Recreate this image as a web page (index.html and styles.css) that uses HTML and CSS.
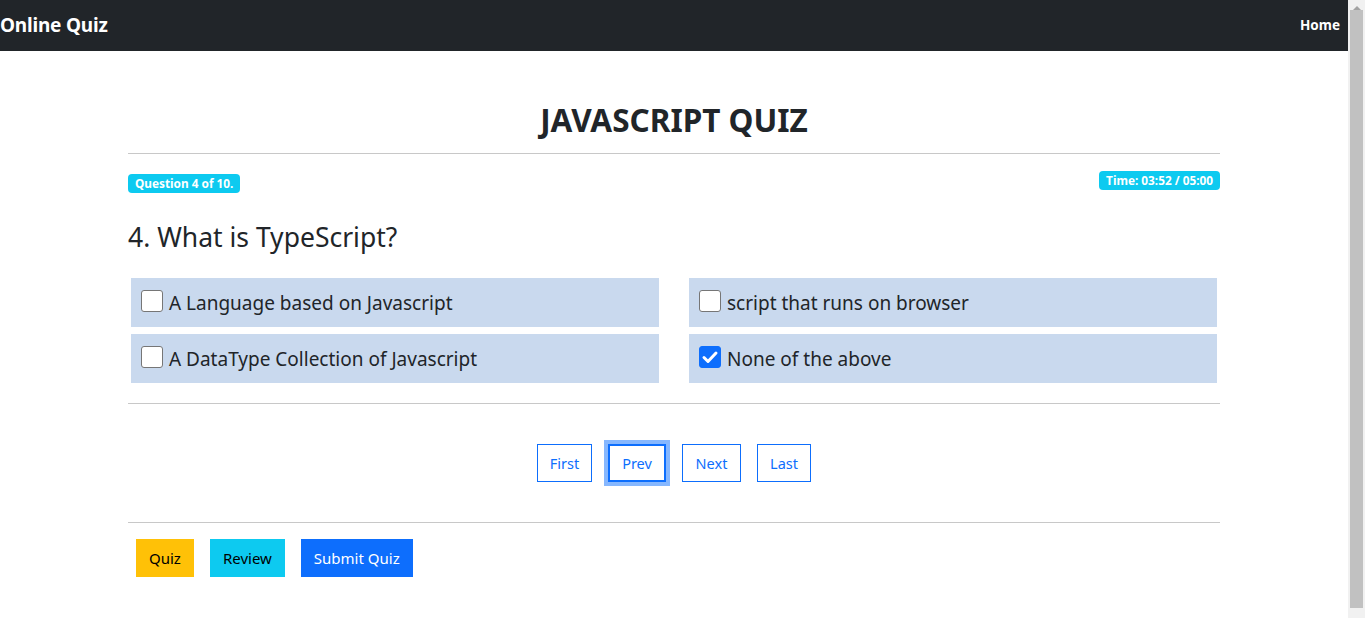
FILE: index.html
```html
<!DOCTYPE html>
<html>
<head>
<meta charset="utf-8">
<link rel="stylesheet" href="styles.css">
</head>
<body>
<div class="page">
  <nav class="navbar">
    <span class="brand">Online Quiz</span>
    <span class="nav-link">Home</span>
  </nav>
  <main class="container">
    <h1 class="title">JAVASCRIPT QUIZ</h1>
    <hr class="rule first-rule">
    <div class="badges">
      <span class="badge badge-q">Question 4 of 10.</span>
      <span class="badge badge-t">Time: 03:52 / 05:00</span>
    </div>
    <h2 class="question">4. What is TypeScript?</h2>
    <div class="options">
      <label class="option"><span class="check"></span><span>A Language based on Javascript</span></label>
      <label class="option"><span class="check"></span><span>script that runs on browser</span></label>
      <label class="option"><span class="check"></span><span>A DataType Collection of Javascript</span></label>
      <label class="option"><span class="check checked"><svg viewBox="0 0 22 22" width="22" height="22"><path d="M5 11.5l4 4 8-8.5" fill="none" stroke="#fff" stroke-width="3" stroke-linecap="round" stroke-linejoin="round"/></svg></span><span>None of the above</span></label>
    </div>
    <hr class="rule mid-rule">
    <div class="pager">
      <button class="pbtn w-first">First</button>
      <button class="pbtn w-prev focused">Prev</button>
      <button class="pbtn w-next">Next</button>
      <button class="pbtn w-last">Last</button>
    </div>
    <hr class="rule bottom-rule">
    <div class="actions">
      <button class="abtn warn">Quiz</button>
      <button class="abtn info">Review</button>
      <button class="abtn primary">Submit Quiz</button>
    </div>
  </main>
</div>
<div class="scrollbar"><div class="arrow"></div><div class="thumb"></div></div>
</body>
</html>
```
FILE: styles.css
```css
* { box-sizing: border-box; }
html, body { margin: 0; padding: 0; overflow: hidden; }
body {
  font-family: "Segoe UI", "Noto Sans", "Open Sans", sans-serif;
  color: #212529;
  background: #fff;
  width: 1348px;
  height: 618px;
}
.navbar {
  height: 51px;
  background: #212529;
  display: flex;
  align-items: center;
  justify-content: space-between;
  padding: 0 8px 0 0;
}
.brand {
  color: #fff;
  font-weight: 700;
  font-size: 19px;
  letter-spacing: -0.2px;
  margin-top: -2px;
}
.nav-link {
  color: #fff;
  font-weight: 700;
  font-size: 13.5px;
  margin-top: -2px;
}
.container {
  width: 1092px;
  margin: 0 auto;
}
.title {
  margin: 48px 0 0;
  text-align: center;
  font-size: 31.5px;
  font-weight: 700;
  line-height: 42px;
}
.rule {
  border: 0;
  border-top: 1px solid #c8c8c8;
  margin: 0;
}
.first-rule { margin-top: 12px; }
.badges {
  display: flex;
  justify-content: space-between;
  align-items: flex-start;
  margin-top: 17px;
}
.badge {
  background: #0dcaf0;
  color: #fff;
  font-weight: 700;
  font-size: 11.8px;
  line-height: 19px;
  height: 19px;
  padding: 0 7px;
  border-radius: 4px;
}
.badge-q { margin-top: 3px; }
.question {
  margin: 26px 0 0;
  font-size: 26.5px;
  font-weight: 400;
  line-height: 36px;
}
.options {
  display: grid;
  grid-template-columns: 1fr 1fr;
  column-gap: 30px;
  row-gap: 7px;
  padding: 0 3px;
  margin-top: 23px;
}
.option {
  background: #c9d9ee;
  height: 49px;
  display: flex;
  align-items: center;
  padding-left: 10px;
  font-size: 19px;
  gap: 6px;
}
.check {
  width: 22px;
  height: 22px;
  border: 1px solid #767676;
  border-radius: 3px;
  background: #fff;
  display: inline-flex;
  flex: none;
  margin-top: -4px;
}
.check.checked {
  background: #0d6efd;
  border-color: #0d6efd;
}
.check svg { margin: -1px; }
.mid-rule { margin-top: 20px; }
.pager {
  display: flex;
  justify-content: center;
  gap: 16px;
  margin-top: 40px;
}
.pbtn {
  height: 38px;
  background: #fff;
  border: 1px solid #0d6efd;
  color: #0d6efd;
  font-family: inherit;
  font-size: 14.5px;
  padding: 0;
  border-radius: 0;
}
.w-first { width: 55px; }
.w-prev { width: 58px; }
.w-next { width: 59px; }
.w-last { width: 54px; }
.pbtn.focused {
  box-shadow: 0 0 0 4px #86b7fe;
  border-width: 2px;
}
.bottom-rule { margin-top: 40px; }
.actions {
  display: flex;
  gap: 16px;
  padding-left: 8px;
  margin-top: 16px;
}
.abtn {
  height: 38px;
  border: 0;
  border-radius: 0;
  font-family: inherit;
  font-size: 15px;
  padding: 0 13px;
  color: #000;
}
.warn { background: #ffc107; }
.info { background: #0dcaf0; }
.primary { background: #0d6efd; color: #fff; }
.scrollbar {
  position: fixed;
  top: 0;
  right: 0;
  width: 17px;
  height: 618px;
  background: #f1f1f1;
}
.arrow {
  width: 0; height: 0;
  margin: 6px auto 0;
  border-left: 4px solid transparent;
  border-right: 4px solid transparent;
  border-bottom: 4px solid #a3a3a3;
}
.thumb {
  position: absolute;
  left: 2px;
  top: 10px;
  width: 13px;
  height: 598px;
  background: #c1c1c1;
}
```
